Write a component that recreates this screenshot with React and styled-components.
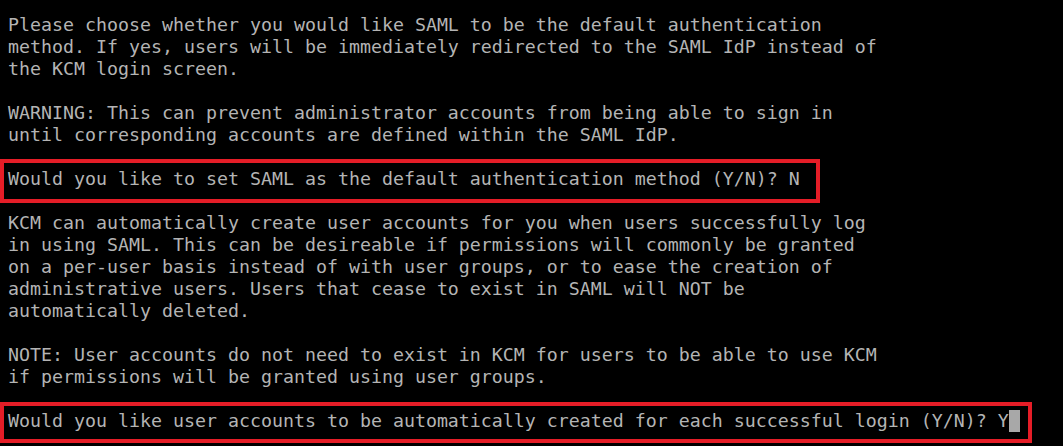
import React from "react";
import styled, { createGlobalStyle } from "styled-components";

const Global = createGlobalStyle`
  html, body { margin: 0; padding: 0; background: #000; }
  body { overflow: hidden; }
`;

const Terminal = styled.div`
  width: 1063px;
  height: 446px;
  box-sizing: border-box;
  padding: 14px 0 0 8px;
  background: #000;
  color: #b4b4b4;
  font-family: "DejaVu Sans Mono", "Liberation Mono", monospace;
  font-size: 18.27px;
  line-height: 22px;
  white-space: pre;
`;

const Line = styled.div`
  position: relative;
  height: 22px;
`;

const Box = styled.span`
  position: absolute;
  left: -8px;
  top: ${(p) => p.$top}px;
  width: ${(p) => p.$w}px;
  height: ${(p) => p.$h}px;
  box-sizing: border-box;
  border: 4px solid #e51d27;
  pointer-events: none;
`;

const Cursor = styled.span`
  display: inline-block;
  width: 11px;
  height: 22px;
  vertical-align: top;
  background: #a8a8a8;
`;

const lines = [
  "Please choose whether you would like SAML to be the default authentication",
  "method. If yes, users will be immediately redirected to the SAML IdP instead of",
  "the KCM login screen.",
  "",
  "WARNING: This can prevent administrator accounts from being able to sign in",
  "until corresponding accounts are defined within the SAML IdP.",
  "",
  { text: "Would you like to set SAML as the default authentication method (Y/N)? N", box: { top: -9, w: 820, h: 44 } },
  "",
  "KCM can automatically create user accounts for you when users successfully log",
  "in using SAML. This can be desireable if permissions will commonly be granted",
  "on a per-user basis instead of with user groups, or to ease the creation of",
  "administrative users. Users that cease to exist in SAML will NOT be",
  "automatically deleted.",
  "",
  "NOTE: User accounts do not need to exist in KCM for users to be able to use KCM",
  "if permissions will be granted using user groups.",
  "",
  { text: "Would you like user accounts to be automatically created for each successful login (Y/N)? Y", box: { top: -8, w: 1032, h: 41 }, cursor: true },
];

export default function App() {
  return (
    <>
      <Global />
      <Terminal>
        {lines.map((l, i) =>
          typeof l === "string" ? (
            <Line key={i}>{l}</Line>
          ) : (
            <Line key={i}>
              {l.text}
              {l.cursor && <Cursor />}
              <Box $top={l.box.top} $w={l.box.w} $h={l.box.h} />
            </Line>
          )
        )}
      </Terminal>
    </>
  );
}
